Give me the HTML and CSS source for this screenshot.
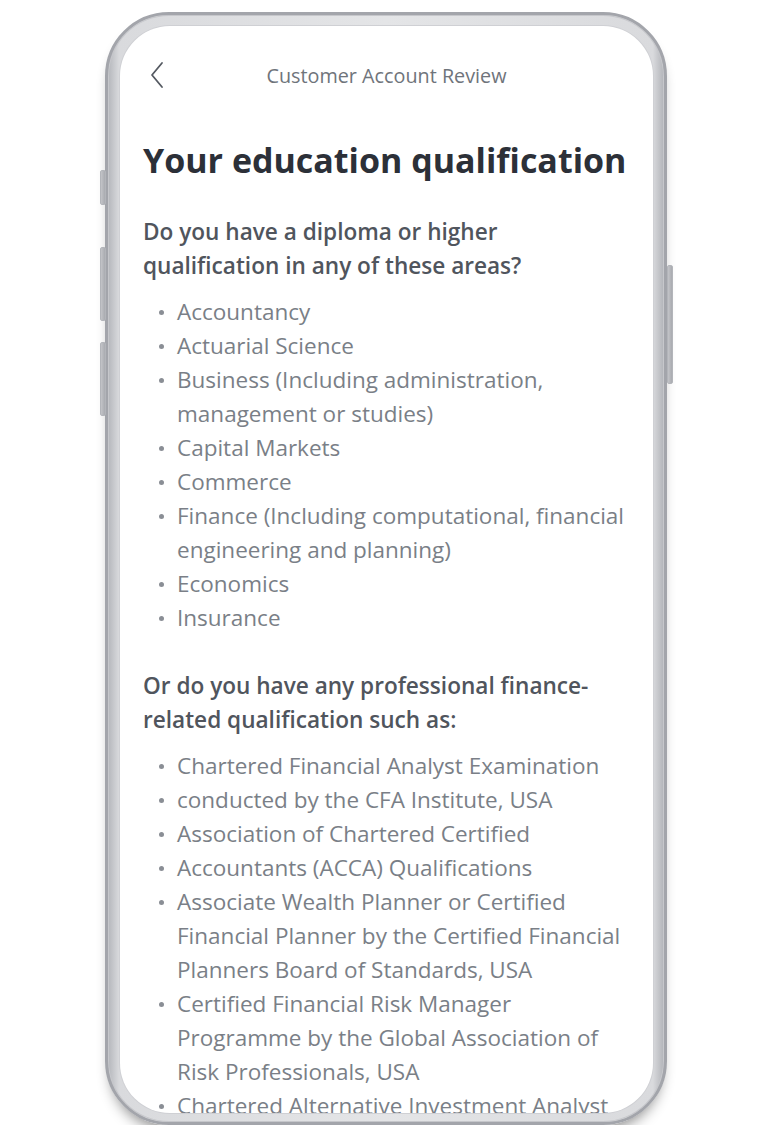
FILE: index.html
```html
<!DOCTYPE html>
<html lang="en">
<head>
  <meta charset="UTF-8">
  <title>Customer Account Review</title>
  <meta name="viewport" content="width=device-width, initial-scale=1.0">
  <link rel="stylesheet" href="styles.css">
</head>
<body>
  <div class="device">
    <span class="key key-mute"></span>
    <span class="key key-vol-up"></span>
    <span class="key key-vol-down"></span>
    <span class="key key-power"></span>

    <div class="screen">
      <header class="topbar">
        <a class="back" href="#" aria-label="Back">
          <svg width="14" height="28" viewBox="0 0 14 28">
            <path d="M12 2 L2 14 L12 26" fill="none" stroke="#555a62" stroke-width="1.8" stroke-linecap="round" stroke-linejoin="round"/>
          </svg>
        </a>
        <span class="topbar-title">Customer Account Review</span>
        <span></span>
      </header>

      <main class="content">
        <h1>Your education qualification</h1>

        <p class="question">Do you have a diploma or higher qualification in any of these areas?</p>
        <ul class="list">
          <li>Accountancy</li>
          <li>Actuarial Science</li>
          <li>Business (Including administration, management or studies)</li>
          <li>Capital Markets</li>
          <li>Commerce</li>
          <li>Finance (Including computational, financial engineering and planning)</li>
          <li>Economics</li>
          <li>Insurance</li>
        </ul>

        <p class="question question-second">Or do you have any professional finance-related qualification such as:</p>
        <ul class="list">
          <li>Chartered Financial Analyst Examination</li>
          <li>conducted by the CFA Institute, USA</li>
          <li>Association of Chartered Certified</li>
          <li>Accountants (ACCA) Qualifications</li>
          <li>Associate Wealth Planner or Certified Financial Planner by the Certified Financial Planners Board of Standards, USA</li>
          <li>Certified Financial Risk Manager Programme by the Global Association of Risk Professionals, USA</li>
          <li>Chartered Alternative Investment Analyst</li>
        </ul>
      </main>
    </div>
  </div>
</body>
</html>
```

FILE: styles.css
```css
body {
  margin: 0;
  background-color: #fff;
  font-family: "Open Sans", "Liberation Sans", sans-serif;
}
.device {
  position: relative;
  box-sizing: border-box;
  width: 562px;
  height: 1113px;
  margin: 12px 0 0 105px;
  padding: 11px 11px 9px 12px;
  border: 3px solid #a3a5ab;
  border-radius: 64px;
  background: linear-gradient(90deg, #b4b6bb 0%, #d9dadd 2%, #e4e5e7 50%, #d9dadd 98%, #b1b3b8 100%);
  box-shadow: 0 10px 14px -6px rgba(0,0,0,0.45), inset 0 0 0 1px #c6c7cb;
}
.key {
  position: absolute;
  width: 4px;
  background: linear-gradient(90deg, #c3c4c8, #a9abb0);
  border: 1px solid #b3b5ba;
  border-radius: 2px;
}
.key-mute {
  left: -8px;
  top: 155px;
  height: 33px;
}
.key-vol-up {
  left: -8px;
  top: 232px;
  height: 72px;
}
.key-vol-down {
  left: -8px;
  top: 327px;
  height: 72px;
}
.key-power {
  right: -9px;
  top: 250px;
  height: 117px;
}
.screen {
  height: 100%;
  background-color: #fff;
  border-radius: 50px;
  overflow: hidden;
  box-shadow: 0 0 0 1px #cfd0d4;
}
.topbar {
  display: grid;
  grid-template-columns: 60px 1fr 60px;
  align-items: center;
  height: 98px;
  padding: 0 0 0 30px;
}
.back {
  display: flex;
  align-items: center;
}
.topbar-title {
  text-align: center;
  font-size: 19.8px;
  color: #6f747b;
  margin-left: -30px;
}
.content {
  padding: 0 24px 0 23px;
}
h1 {
  margin: 14px 0 0;
  font-size: 34px;
  line-height: 44px;
  font-weight: 700;
  color: #2c3038;
}
.question {
  margin: 33px 0 0;
  font-size: 22.6px;
  line-height: 34px;
  font-weight: 600;
  color: #50555d;
}
.question-second {
  margin-top: 34px;
}
.list {
  list-style: none;
  margin: 12px 0 0;
  padding: 0 0 0 34px;
}
.list li {
  position: relative;
  font-size: 22.5px;
  line-height: 34px;
  color: #7a7f87;
}
.list li::before {
  content: "";
  position: absolute;
  left: -18px;
  top: 15px;
  width: 5px;
  height: 5px;
  border-radius: 50%;
  background-color: #8a8e95;
}
```
